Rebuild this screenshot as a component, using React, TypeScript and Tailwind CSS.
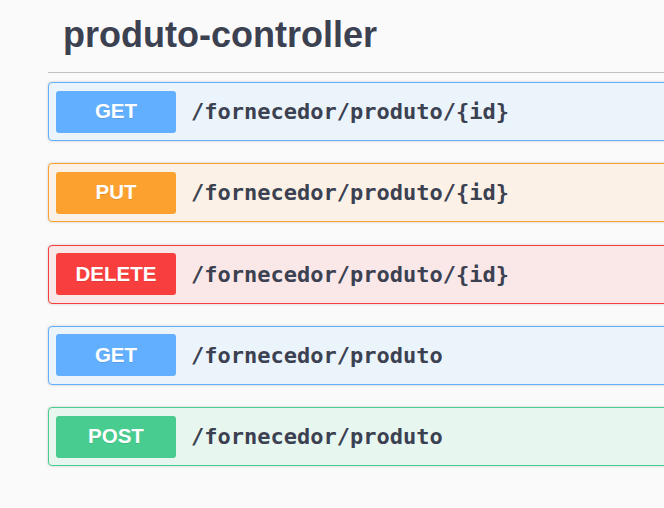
const endpoints = [
  { method: 'GET', path: '/fornecedor/produto/{id}', row: 'bg-[#ebf3fb] border-[#61affe]', badge: 'bg-[#61affe]' },
  { method: 'PUT', path: '/fornecedor/produto/{id}', row: 'bg-[#fbf1e6] border-[#fca130]', badge: 'bg-[#fca130]' },
  { method: 'DELETE', path: '/fornecedor/produto/{id}', row: 'bg-[#fae7e7] border-[#f93e3e]', badge: 'bg-[#f93e3e]' },
  { method: 'GET', path: '/fornecedor/produto', row: 'bg-[#ebf3fb] border-[#61affe]', badge: 'bg-[#61affe]' },
  { method: 'POST', path: '/fornecedor/produto', row: 'bg-[#e8f6f0] border-[#49cc90]', badge: 'bg-[#49cc90]' },
]

export default function App() {
  return (
    <div className="w-[664px] h-[508px] overflow-hidden bg-[#fafafa] text-[#3b4151]">
      <div className="w-[740px] pl-[48px]">
        {/* tag header */}
        <h3 className="pl-[15px] pt-[14px] pb-[17px] border-b border-[#3b41514d] text-[36px] leading-[41px] font-bold font-['Liberation_Sans',Arial,sans-serif]">
          produto-controller
        </h3>

        {/* operations */}
        <div className="mt-[9px] flex flex-col gap-[22.25px]">
          {endpoints.map((e, i) => (
            <div
              key={i}
              className={`flex h-[59px] items-center gap-[15px] rounded-[4px] border pl-[7px] shadow-[0_0_3px_rgba(0,0,0,0.19)] ${e.row}`}
            >
              <span
                className={`flex h-[42px] w-[120px] shrink-0 items-center justify-center rounded-[3px] text-[20.5px] font-bold text-white font-['Liberation_Sans',Arial,sans-serif] [text-shadow:0_1px_0_rgba(0,0,0,0.1)] ${e.badge}`}
              >
                {e.method}
              </span>
              <span className="text-[22px] font-bold font-['DejaVu_Sans_Mono',monospace]">
                {e.path}
              </span>
            </div>
          ))}
        </div>
      </div>
    </div>
  )
}
